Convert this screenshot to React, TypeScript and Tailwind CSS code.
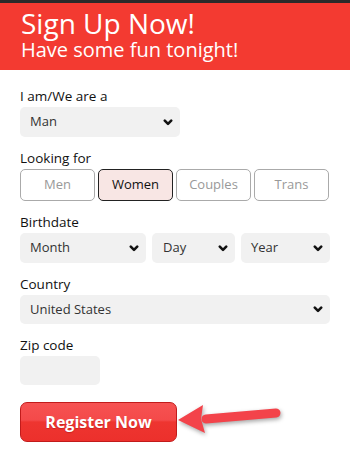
import React from "react";

const font = { fontFamily: '"Open Sans", "Liberation Sans", sans-serif' };

function Chevron() {
  return (
    <svg width="10" height="7" viewBox="0 0 10 7" className="shrink-0">
      <path d="M1.8 1.6 L5 4.8 L8.2 1.6" fill="none" stroke="#111" strokeWidth="2.6" strokeLinecap="round" strokeLinejoin="round" />
    </svg>
  );
}

function FakeSelect({ value, className }: { value: string; className: string }) {
  return (
    <div className={`h-[30px] bg-[#f1f1f1] rounded-[5px] flex items-center justify-between pl-[10px] pr-[7px] text-[13px] font-medium text-[#333] ${className}`}>
      <span>{value}</span>
      <Chevron />
    </div>
  );
}

function Label({ children }: { children: React.ReactNode }) {
  return <div className="h-[18px] leading-[18px] text-[13.5px] font-medium text-[#111] mb-[2px]">{children}</div>;
}

export default function App() {
  const opts = ["Men", "Women", "Couples", "Trans"];
  return (
    <div className="w-[350px] h-[464px] bg-white overflow-hidden" style={font}>
      <div className="h-[3px] bg-[#2a2a2a]" />
      <div className="h-[67px] bg-[#f33a31] pt-[5px] pl-[21px] text-white">
        <div className="text-[28px] leading-[30px]">Sign Up Now!</div>
        <div className="text-[20px] leading-[23px]">Have some fun tonight!</div>
      </div>
      <div className="px-[20px] pt-[17px] flex flex-col gap-[12px]">
        <div>
          <Label>I am/We are a</Label>
          <FakeSelect value="Man" className="w-[160px]" />
        </div>
        <div>
          <Label>Looking for</Label>
          <div className="flex gap-[3px]">
            {opts.map((o) => (
              <div
                key={o}
                className={
                  o === "Women"
                    ? "w-[75px] h-[32px] rounded-[5px] border border-[#222] bg-[#f8e6e4] text-[#111] text-[13px] font-medium flex items-center justify-center"
                    : "w-[75px] h-[32px] rounded-[5px] border border-[#aaa] bg-white text-[#999] text-[13px] font-medium flex items-center justify-center"
                }
              >
                {o}
              </div>
            ))}
          </div>
        </div>
        <div>
          <Label>Birthdate</Label>
          <div className="flex gap-[6px]">
            <FakeSelect value="Month" className="w-[126px]" />
            <FakeSelect value="Day" className="w-[83px] pl-[11px]" />
            <FakeSelect value="Year" className="w-[89px]" />
          </div>
        </div>
        <div>
          <Label>Country</Label>
          <FakeSelect value="United States" className="w-[310px] !h-[29px]" />
        </div>
        <div>
          <Label>Zip code</Label>
          <div className="w-[80px] h-[29px] bg-[#f1f1f1] rounded-[5px]" />
        </div>
        <div className="relative mt-[5px]">
          <div
            className="w-[157px] h-[40px] rounded-[7px] border border-[#c21b1b] flex items-center justify-center text-white font-bold text-[16px]"
            style={{ background: "linear-gradient(to bottom, #f65252 0%, #f44a4a 45%, #ee3530 50%, #ec302c 100%)", textShadow: "0 1px 1px rgba(120,0,0,0.3)" }}
          >
            Register Now
          </div>
          <svg
            className="absolute left-[150px] top-[-7px]"
            width="120"
            height="50"
            viewBox="0 0 120 50"
            style={{ filter: "drop-shadow(1px 2px 2px rgba(0,0,0,0.35))" }}
          >
            <line x1="36" y1="24" x2="106" y2="18" stroke="#f3434a" strokeWidth="9" strokeLinecap="round" />
            <polygon points="8,25 33,10 31,24 35,38" fill="#f3434a" />
          </svg>
        </div>
      </div>
    </div>
  );
}
